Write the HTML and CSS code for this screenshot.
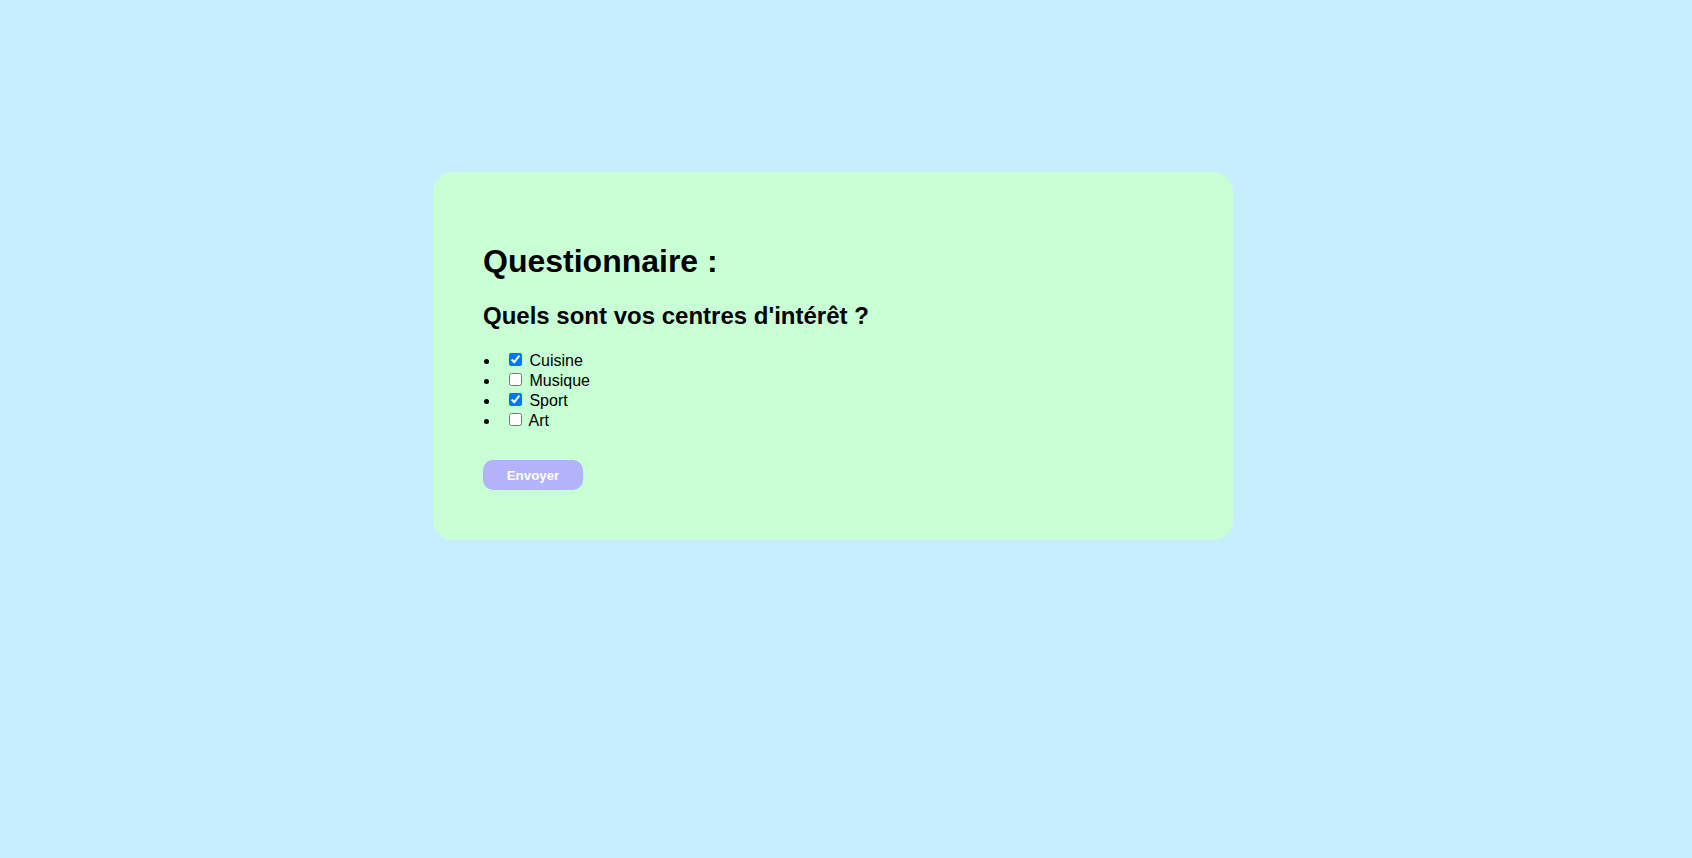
FILE: index.html
```html
<!DOCTYPE html>
<html lang="fr">
<head>
<meta charset="utf-8">
<title>Questionnaire</title>
<link rel="stylesheet" href="styles.css">
</head>
<body>
<div class="page">
  <form class="card">
    <h1 class="title">Questionnaire :</h1>
    <h2 class="question">Quels sont vos centres d'intérêt ?</h2>
    <ul class="choices">
      <li><input type="checkbox" class="box" checked> Cuisine</li>
      <li><input type="checkbox" class="box"> Musique</li>
      <li><input type="checkbox" class="box" checked> Sport</li>
      <li><input type="checkbox" class="box"> Art</li>
    </ul>
    <button type="button" class="send">Envoyer</button>
  </form>
</div>
</body>
</html>
```

FILE: styles.css
```css
html, body {
  margin: 0;
  padding: 0;
}
body {
  background: #c7eeff;
  font-family: "Liberation Sans", Arial, sans-serif;
  color: #000;
  min-height: 100vh;
}
.page {
  padding: 172px 26px 0 0;
  display: flex;
  justify-content: center;
}
.card {
  width: 700px;
  padding: 50px;
  background: #c8ffd5;
  border-radius: 20px;
}
.title {
  font-size: 32px;
  margin: 0 0 22px;
  padding-top: 21px;
}
.question {
  font-size: 24px;
  margin: 0 0 20px;
}
.choices {
  margin: 0 0 30px;
  padding-left: 17px;
  font-size: 16px;
}
.box {
  margin: 3px 3px 3px 9px;
}
.send {
  width: 100px;
  height: 30px;
  border: none;
  border-radius: 10px;
  background: #b3b3fb;
  color: #fff;
  font-family: "Liberation Sans", Arial, sans-serif;
  font-weight: bold;
  font-size: 13.33px;
}
```
